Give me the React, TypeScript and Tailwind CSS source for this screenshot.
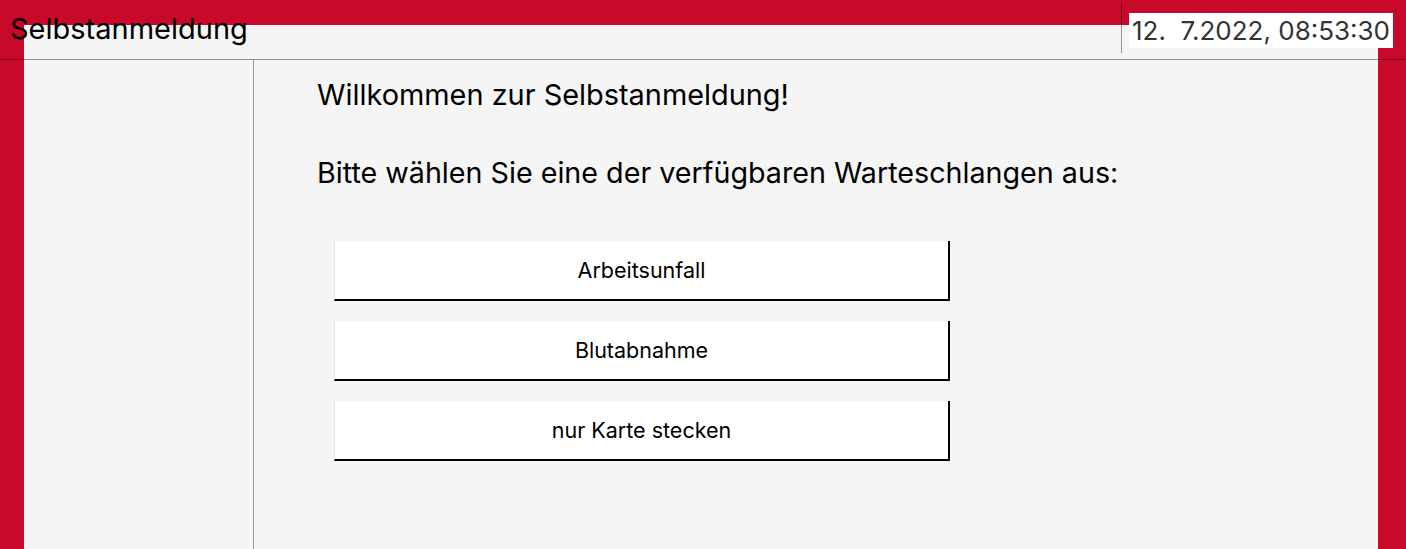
import React from 'react';

const queues = ['Arbeitsunfall', 'Blutabnahme', 'nur Karte stecken'];

const App: React.FC = () => {
    return (
        <div
            className="h-[549px] w-full overflow-hidden bg-[#c8092a] pt-[25px] pl-[24px] pr-[28px]"
            style={{ fontFamily: 'Inter, "Noto Sans", sans-serif' }}
        >
            <div className="flex h-full flex-col bg-[#f5f5f5]">
                {/* Header */}
                <div className="flex h-[34px] shrink-0 items-start justify-between">
                    <h1 className="-ml-[14px] -mt-[16px] text-[29px] leading-[40px] font-normal text-black">
                        Selbstanmeldung
                    </h1>
                    <div className="-mr-[15px] -mt-[22px] flex items-start">
                        <div className="h-[50px] w-px bg-black/40" />
                        <div className="ml-[7px] mt-[10px] flex h-[35px] w-[264px] items-center justify-center bg-white text-[26px] text-[#333] whitespace-pre">
                            12.  7.2022, 08:53:30
                        </div>
                    </div>
                </div>
                <div className="-ml-[24px] -mr-[28px] h-px shrink-0 bg-black/40" />

                {/* Body */}
                <div className="flex flex-1">
                    <aside className="w-[230px] shrink-0 border-r border-[#9a9a9a]" />
                    <main className="flex-1 pl-[63px] pt-[15px]">
                        <p className="text-[28.9px] leading-[40px] text-black">
                            Willkommen zur Selbstanmeldung!
                        </p>
                        <p className="mt-[38px] text-[28.7px] leading-[40px] text-black">
                            Bitte wählen Sie eine der verfügbaren Warteschlangen aus:
                        </p>
                        <div className="ml-[17px] mt-[48px] flex flex-col gap-[20px]">
                            {queues.map((q) => (
                                <button
                                    key={q}
                                    className="flex h-[60px] w-[616px] items-center justify-center border-l border-l-[#e4e4e4] border-r-2 border-b-2 border-r-black border-b-black bg-white text-[21.5px] text-black"
                                >
                                    {q}
                                </button>
                            ))}
                        </div>
                    </main>
                </div>
            </div>
        </div>
    );
};

export default App;
